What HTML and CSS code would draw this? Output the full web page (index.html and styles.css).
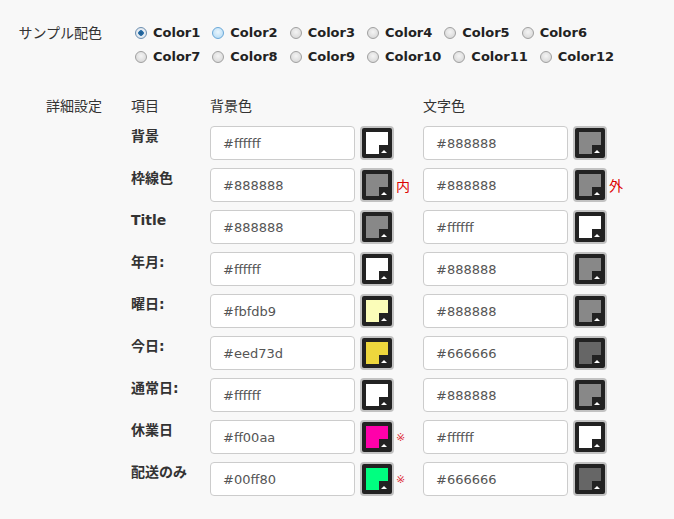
FILE: index.html
```html
<!DOCTYPE html>
<html lang="ja">
<head>
  <meta charset="UTF-8" />
  <title>配色設定</title>
  <link rel="stylesheet" href="styles.css">
</head>
<body>
  <div class="form">
    <div class="field">
      <div class="field-label">サンプル配色</div>
      <div class="field-body">
        <div class="radio-row">
          <label class="radio"><span class="dot checked"></span>Color1</label>
          <label class="radio"><span class="dot hover"></span>Color2</label>
          <label class="radio"><span class="dot"></span>Color3</label>
          <label class="radio"><span class="dot"></span>Color4</label>
          <label class="radio"><span class="dot"></span>Color5</label>
          <label class="radio"><span class="dot"></span>Color6</label>
        </div>
        <div class="radio-row">
          <label class="radio"><span class="dot"></span>Color7</label>
          <label class="radio"><span class="dot"></span>Color8</label>
          <label class="radio"><span class="dot"></span>Color9</label>
          <label class="radio"><span class="dot"></span>Color10</label>
          <label class="radio"><span class="dot"></span>Color11</label>
          <label class="radio"><span class="dot"></span>Color12</label>
        </div>
      </div>
    </div>

    <div class="field detail">
      <div class="field-label">詳細設定</div>
      <div class="field-body">
        <div class="grid" id="grid">
          <div class="head">項目</div>
          <div class="head">背景色</div>
          <div class="head"></div>
          <div class="head">文字色</div>
          <div class="head"></div>
        </div>
      </div>
    </div>
  </div>

  <script>
    const rows = [
      { name: '背景',   bg: '#ffffff', fg: '#888888' },
      { name: '枠線色', bg: '#888888', fg: '#888888', bgNote: '内', fgNote: '外' },
      { name: 'Title',  bg: '#888888', fg: '#ffffff' },
      { name: '年月:',  bg: '#ffffff', fg: '#888888' },
      { name: '曜日:',  bg: '#fbfdb9', fg: '#888888' },
      { name: '今日:',  bg: '#eed73d', fg: '#666666' },
      { name: '通常日:', bg: '#ffffff', fg: '#888888' },
      { name: '休業日', bg: '#ff00aa', fg: '#ffffff', bgNote: '※', mark: true },
      { name: '配送のみ', bg: '#00ff80', fg: '#666666', bgNote: '※', mark: true }
    ];

    function swatch(color, note, mark) {
      let html = '<div class="pick"><span class="swatch"><span class="swatch-color" style="background:' + color + '"></span><span class="swatch-corner"></span></span>';
      if (note) {
        html += '<span class="note' + (mark ? ' mark' : '') + '">' + note + '</span>';
      }
      return html + '</div>';
    }

    const grid = document.getElementById('grid');
    rows.forEach(r => {
      grid.insertAdjacentHTML('beforeend',
        '<div class="item">' + r.name + '</div>' +
        '<input class="hex" type="text" value="' + r.bg + '">' +
        swatch(r.bg, r.bgNote, r.mark) +
        '<input class="hex" type="text" value="' + r.fg + '">' +
        swatch(r.fg, r.fgNote, false));
    });
  </script>
</body>
</html>
```

FILE: styles.css
```css
body {
  margin: 0;
  background: #f8f8f8;
  color: #333;
  font-family: 'DejaVu Sans', 'Noto Sans CJK JP', sans-serif;
  font-size: 14px;
}

.form {
  padding: 21px 0 0 10px;
}

.field {
  display: flex;
}

.field-label {
  width: 92px;
  text-align: right;
  line-height: 24px;
  flex-shrink: 0;
}

.field-body {
  margin-left: 29px;
}

.radio-row {
  display: flex;
  padding-left: 4px;
  line-height: 24px;
}

.radio {
  display: flex;
  align-items: center;
  margin-right: 12px;
  font-size: 13px;
  font-weight: bold;
  color: #222;
}

.dot {
  width: 12px;
  height: 12px;
  margin-right: 6px;
  box-sizing: border-box;
  border-radius: 50%;
  border: 1px solid #a0a0a0;
  background: radial-gradient(circle at 50% 40%, #f4f4f4 0, #dcdcdc 70%, #c8c8c8 100%);
}

.dot.hover {
  border-color: #6aa8d8;
  background: radial-gradient(circle at 50% 40%, #eaf6fd 0, #bfe0f6 70%, #a7d2f0 100%);
}

.dot.checked {
  border-color: #6d8fb0;
  background: radial-gradient(circle, #1d5a8e 0, #2a6fa8 2.5px, #e8eef4 3px, #d8e0e8 100%);
}

.detail {
  margin-top: 26px;
}

.detail .field-label {
  line-height: 23px;
}

.grid {
  display: grid;
  grid-template-columns: 79px 145px 68px 145px auto;
  row-gap: 8px;
}

.head {
  line-height: 23px;
}

.item {
  font-weight: bold;
  line-height: 20px;
  font-size: 14px;
}

.hex {
  width: 145px;
  height: 34px;
  box-sizing: border-box;
  margin: 0;
  padding: 0 0 0 12px;
  border: 1px solid #cccccc;
  border-radius: 4px;
  background: #fff;
  color: #555;
  font-family: 'DejaVu Sans', sans-serif;
  font-size: 13px;
}

.pick {
  display: flex;
  align-items: center;
  padding-left: 5px;
}

.swatch {
  position: relative;
  display: block;
  width: 34px;
  height: 34px;
  box-sizing: border-box;
  padding: 4px;
  border: 2px solid #c2c2c2;
  border-radius: 4px;
  background: #222;
}

.swatch-color {
  display: block;
  width: 22px;
  height: 22px;
}

.swatch-corner {
  position: absolute;
  right: 4px;
  bottom: 4px;
  width: 9px;
  height: 9px;
  background: #222;
}

.swatch-corner::after {
  content: '';
  position: absolute;
  left: 2px;
  bottom: 1px;
  border-left: 3px solid transparent;
  border-right: 3px solid transparent;
  border-bottom: 3px solid #fff;
}

.note {
  margin-left: 2px;
  color: #d00;
  font-size: 14px;
}

.note.mark {
  font-size: 11px;
  color: #e0303a;
}
```
